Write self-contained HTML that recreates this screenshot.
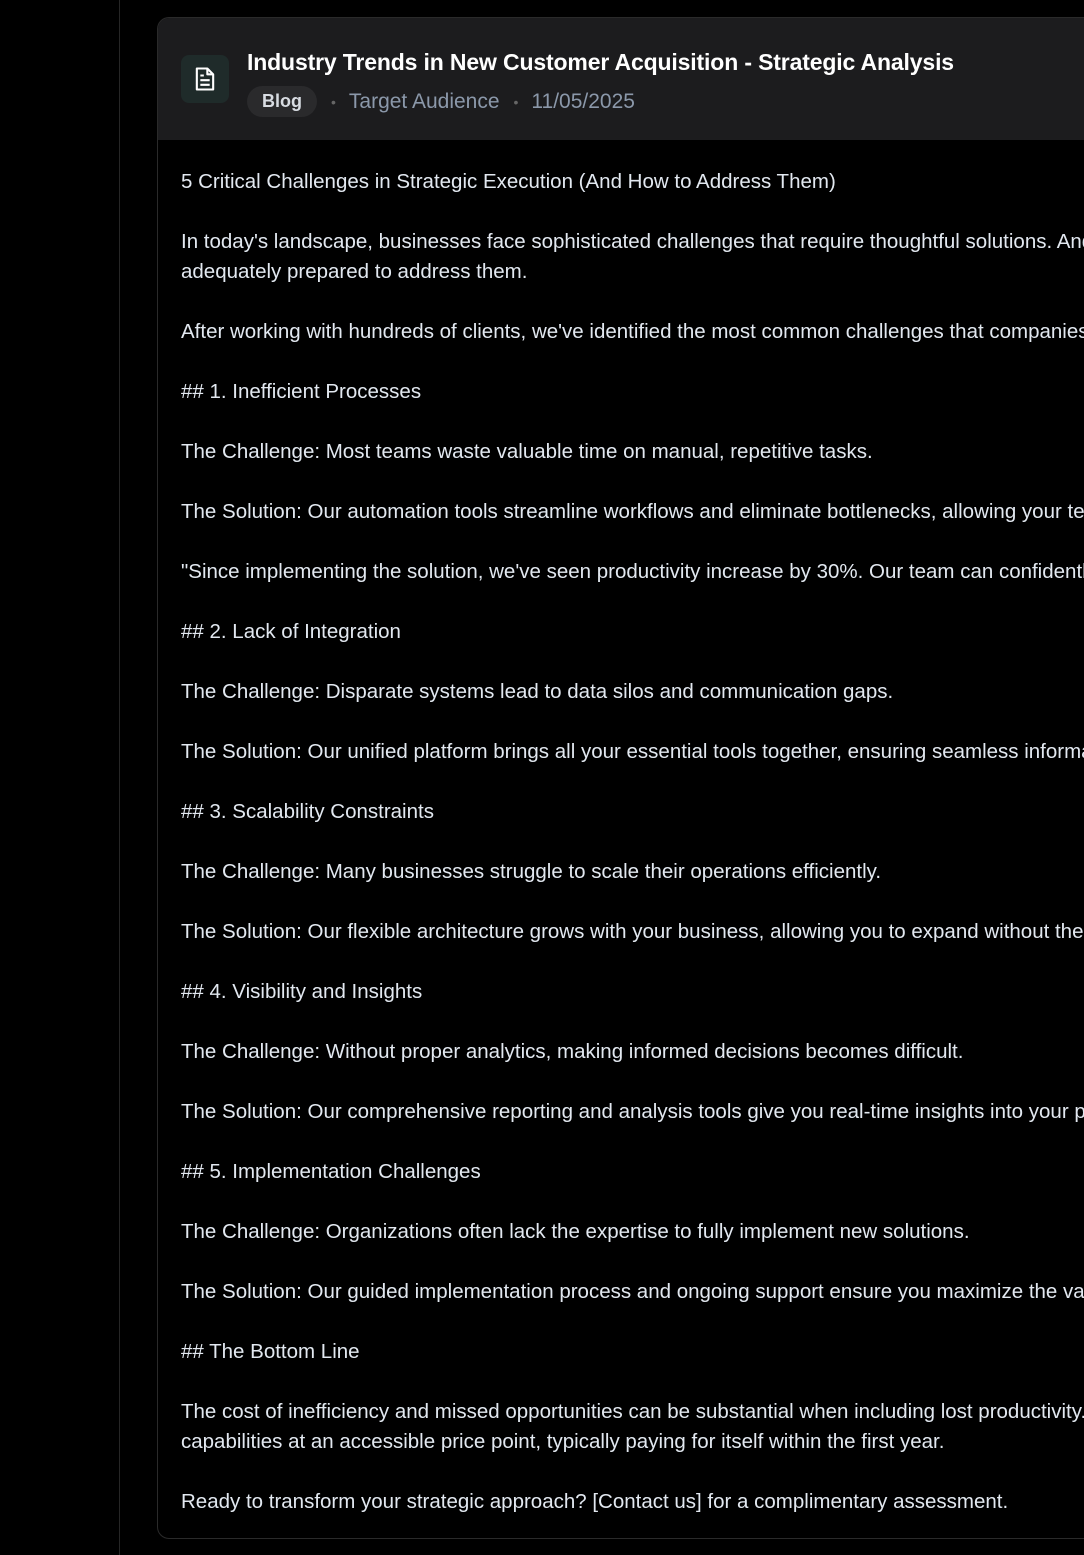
<!DOCTYPE html>
<html><head><meta charset="utf-8"><style>
html,body{margin:0;padding:0;background:#000;width:1084px;height:1555px;overflow:hidden;}
.vline{position:absolute;left:119px;top:0;width:1px;height:1555px;background:#262626;}
.card{position:absolute;left:157px;top:17px;width:927px;height:1520px;border:1px solid #2a2a2a;border-right:none;border-radius:12px 0 0 12px;overflow:hidden;background:#000;}
.head{height:122px;background:#1c1c1e;position:relative;}
.icon{position:absolute;left:23px;top:37px;width:48px;height:48px;border-radius:8px;background:#1f2b2a;display:flex;align-items:center;justify-content:center;}
.title{position:absolute;left:89px;top:31px;font:bold 23px "Liberation Sans",sans-serif;color:#fff;white-space:nowrap;letter-spacing:-0.15px;}
.meta{position:absolute;left:89px;top:68px;font:21px "Liberation Sans",sans-serif;color:#8b98aa;white-space:nowrap;display:flex;align-items:center;}
.badge{background:#2a2a2c;color:#d8dce2;font-weight:bold;font-size:18px;border-radius:16px;padding:5px 15px;}
.dot{margin:0 13px 0 14px;color:#666;font-size:14px;}
.body{padding:27px 0 0 23px;font:20.5px/30px "Liberation Sans",sans-serif;color:#e2e8f0;white-space:pre;overflow:hidden;}
</style></head><body>
<div class="vline"></div>
<div class="card">
<div class="head">
<div class="icon"><svg width="28" height="28" viewBox="0 0 24 24" fill="none" stroke="#fff" stroke-width="1.8" stroke-linejoin="round"><path d="M5 3h9l5 5v13H5z"/><path d="M14 3v5h5"/><path d="M8 9h3M8 13h8M8 17h8"/></svg></div>
<div class="title">Industry Trends in New Customer Acquisition - Strategic Analysis</div>
<div class="meta"><span class="badge">Blog</span><span class="dot">•</span>Target Audience<span class="dot">•</span>11/05/2025</div>
</div>
<div class="body">5 Critical Challenges in Strategic Execution (And How to Address Them)

In today's landscape, businesses face sophisticated challenges that require thoughtful solutions. And yet many are not
adequately prepared to address them.

After working with hundreds of clients, we've identified the most common challenges that companies face today.

## 1. Inefficient Processes

The Challenge: Most teams waste valuable time on manual, repetitive tasks.

The Solution: Our automation tools streamline workflows and eliminate bottlenecks, allowing your team to focus.

"Since implementing the solution, we've seen productivity increase by 30%. Our team can confidently focus on growth."

## 2. Lack of Integration

The Challenge: Disparate systems lead to data silos and communication gaps.

The Solution: Our unified platform brings all your essential tools together, ensuring seamless information flow.

## 3. Scalability Constraints

The Challenge: Many businesses struggle to scale their operations efficiently.

The Solution: Our flexible architecture grows with your business, allowing you to expand without the growing pains.

## 4. Visibility and Insights

The Challenge: Without proper analytics, making informed decisions becomes difficult.

The Solution: Our comprehensive reporting and analysis tools give you real-time insights into your performance.

## 5. Implementation Challenges

The Challenge: Organizations often lack the expertise to fully implement new solutions.

The Solution: Our guided implementation process and ongoing support ensure you maximize the value of your investment.

## The Bottom Line

The cost of inefficiency and missed opportunities can be substantial when including lost productivity. We deliver these
capabilities at an accessible price point, typically paying for itself within the first year.

Ready to transform your strategic approach? [Contact us] for a complimentary assessment.</div>
</div>
</body></html>
